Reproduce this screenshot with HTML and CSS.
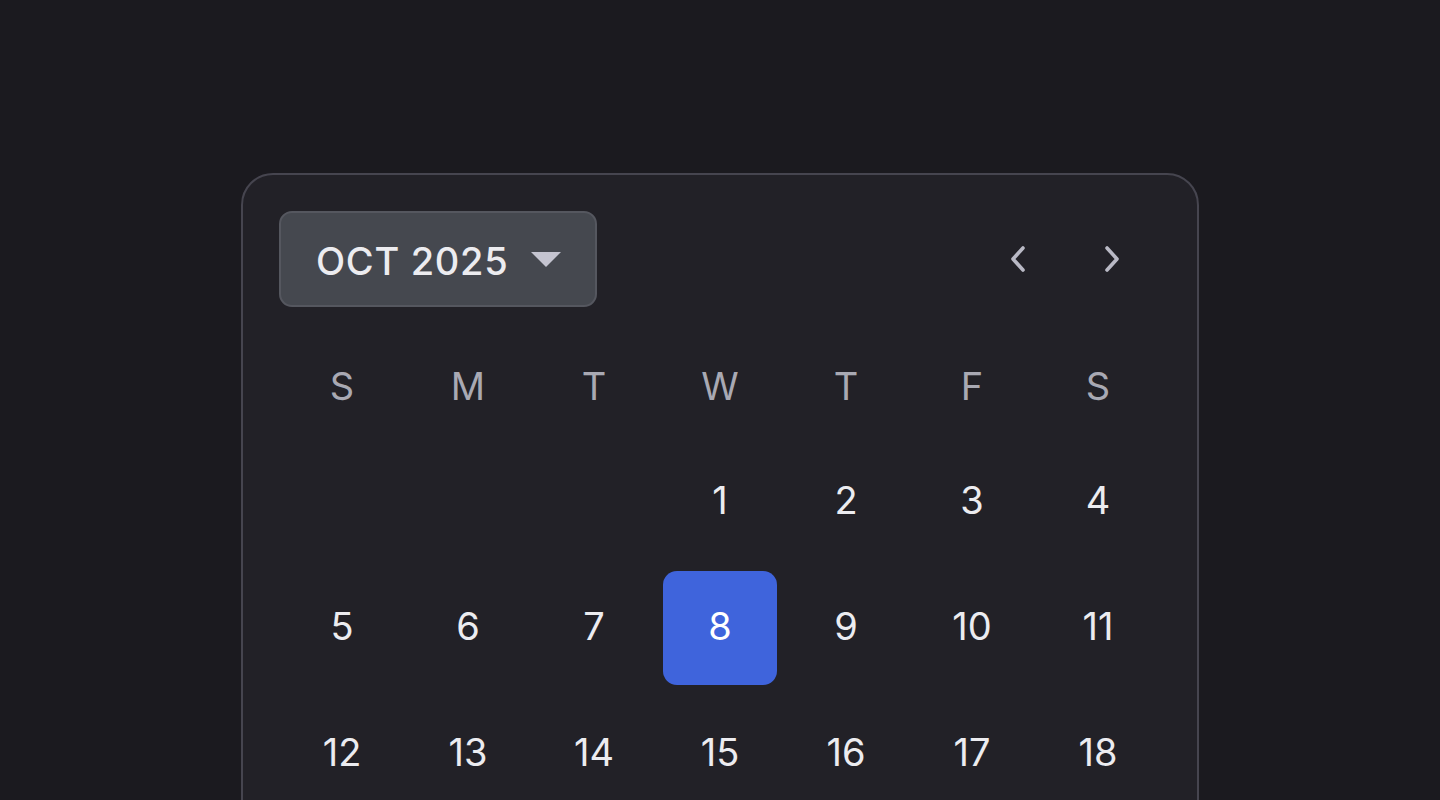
FILE: index.html
```html
<!DOCTYPE html>
<html lang="en">
<head>
<meta charset="utf-8">
<title>Calendar</title>
<link rel="stylesheet" href="styles.css">
</head>
<body>
<div class="card">
  <div class="header">
    <button class="month-btn">
      <span class="month-label">OCT 2025</span>
      <svg class="caret" width="30" height="15" viewBox="0 0 30 15"><path d="M0 0 H30 L15 15 Z" fill="#c4c4d0"/></svg>
    </button>
    <div class="nav">
      <button class="nav-btn" aria-label="Previous month">
        <svg width="24" height="28" viewBox="0 0 24 28"><path d="M18 3 L8 14 L18 25" fill="none" stroke="#b9b9c5" stroke-width="3.6" stroke-linecap="round" stroke-linejoin="round"/></svg>
      </button>
      <button class="nav-btn" aria-label="Next month">
        <svg width="24" height="28" viewBox="0 0 24 28"><path d="M6 3 L16 14 L6 25" fill="none" stroke="#b9b9c5" stroke-width="3.6" stroke-linecap="round" stroke-linejoin="round"/></svg>
      </button>
    </div>
  </div>
  <div class="weekdays">
    <div>S</div><div>M</div><div>T</div><div>W</div><div>T</div><div>F</div><div>S</div>
  </div>
  <div class="days">
    <div></div><div></div><div></div>
    <div class="day">1</div><div class="day">2</div><div class="day">3</div><div class="day">4</div>
    <div class="day">5</div><div class="day">6</div><div class="day">7</div><div class="day selected">8</div><div class="day">9</div><div class="day">10</div><div class="day">11</div>
    <div class="day">12</div><div class="day">13</div><div class="day">14</div><div class="day">15</div><div class="day">16</div><div class="day">17</div><div class="day">18</div>
    <div class="day">19</div><div class="day">20</div><div class="day">21</div><div class="day">22</div><div class="day">23</div><div class="day">24</div><div class="day">25</div>
    <div class="day">26</div><div class="day">27</div><div class="day">28</div><div class="day">29</div><div class="day">30</div><div class="day">31</div>
  </div>
</div>
</body>
</html>
```
FILE: styles.css
```css
html, body {
  margin: 0;
  padding: 0;
  background: #1b1a1f;
}
body {
  padding-top: 173px;
  font-family: Inter, "Noto Sans", sans-serif;
  color: #ececf0;
  display: flex;
  justify-content: center;
}
.card {
  width: 958px;
  box-sizing: border-box;
  border: 2px solid #46454f;
  border-radius: 32px;
  background: #222127;
  padding: 36px;
}
.header {
  display: flex;
  justify-content: space-between;
  align-items: center;
}
.month-btn {
  display: flex;
  align-items: center;
  gap: 23px;
  height: 96px;
  width: 318px;
  box-sizing: border-box;
  padding: 0 35px;
  background: #45484f;
  border: 2px solid #55575f;
  border-radius: 13px;
  color: #ececf0;
  font-family: inherit;
  cursor: pointer;
  white-space: nowrap;
}
.month-label {
  font-size: 38px;
  font-weight: 500;
  letter-spacing: 0.7px;
  padding-top: 3px;
  white-space: nowrap;
}
.caret {
  display: block;
  flex: none;
}
.nav {
  display: flex;
}
.nav-btn {
  width: 96px;
  height: 96px;
  display: flex;
  align-items: center;
  justify-content: center;
  background: transparent;
  border: 0;
  padding: 0;
  cursor: pointer;
}
.weekdays {
  display: grid;
  grid-template-columns: repeat(7, 126px);
  margin-top: 26px;
  height: 106px;
  align-items: center;
  justify-items: center;
  font-size: 38px;
  color: #a9a9b3;
}
.days {
  display: grid;
  grid-template-columns: repeat(7, 126px);
  grid-auto-rows: 126px;
}
.day {
  display: flex;
  align-items: center;
  justify-content: center;
  font-size: 38px;
  color: #ececf0;
  padding-bottom: 4px;
  box-sizing: border-box;
}
.selected {
  margin: 6px;
  border-radius: 14px;
  background: #3f64dc;
  color: #ffffff;
}
```
